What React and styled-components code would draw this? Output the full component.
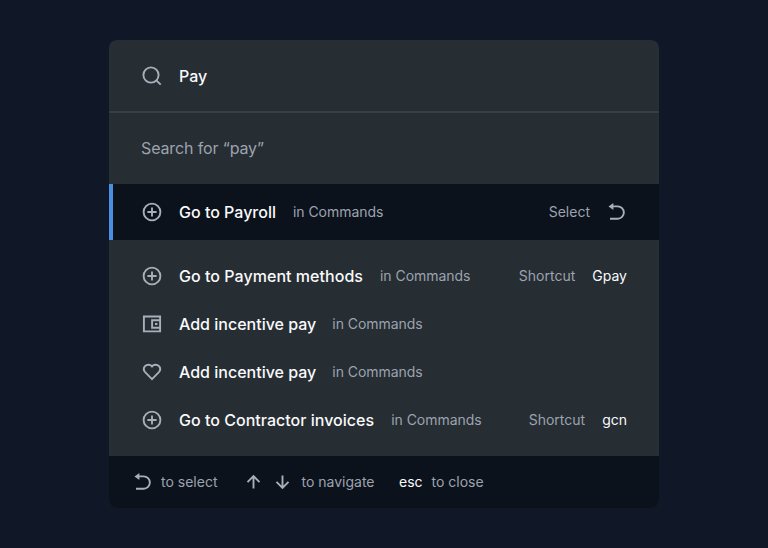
import React from "react";
import styled, { createGlobalStyle } from "styled-components";

const GlobalStyle = createGlobalStyle`
  *, *::before, *::after { box-sizing: border-box; }
  body {
    margin: 0;
    background: #101727;
    font-family: Inter, "Liberation Sans", sans-serif;
  }
`;

const Page = styled.main`
  height: 548px;
  padding: 40px 109px;
  overflow: hidden;
`;

const Palette = styled.section`
  display: flex;
  flex-direction: column;
  width: 550px;
  height: 468px;
  border-radius: 8px;
  overflow: hidden;
  background: #262d33;
`;

const SearchBar = styled.header`
  display: flex;
  align-items: center;
  height: 73px;
  padding: 0 32px;
  border-bottom: 2px solid #373e45;
`;

const Query = styled.span`
  margin-left: 16px;
  font-size: 16px;
  line-height: 24px;
  font-weight: 500;
  color: #f9fafb;
`;

const SearchHint = styled.div`
  height: 71px;
  padding: 23px 32px 0;
  font-size: 16px;
  line-height: 24px;
  letter-spacing: -0.13px;
  color: #9ca3af;
`;

const Results = styled.ul`
  list-style: none;
  margin: 0;
  padding: 0;
  height: 272px;
`;

const Row = styled.li`
  display: flex;
  align-items: center;
  height: ${(p) => (p.$active ? "56px" : "48px")};
  margin-bottom: ${(p) => (p.$active ? "12px" : "0")};
  padding: 0 32px 0 ${(p) => (p.$active ? "28px" : "32px")};
  border-left: ${(p) => (p.$active ? "4px solid #4a90e2" : "0")};
  background: ${(p) => (p.$active ? "#0c121b" : "transparent")};
`;

const Title = styled.span`
  margin-left: 16px;
  font-size: 16px;
  line-height: 24px;
  font-weight: 500;
  letter-spacing: ${(p) => p.$spacing || "0"};
  color: #f9fafb;
`;

const Muted = styled.span`
  font-size: 14px;
  line-height: 20px;
  color: #9ca3af;
`;

const Category = styled(Muted)`
  margin-left: ${(p) => p.$gap || "17px"};
  letter-spacing: -0.04px;
`;

const Action = styled.div`
  display: flex;
  align-items: center;
  gap: 17px;
  margin-left: auto;
`;

const Key = styled.kbd`
  font-family: inherit;
  font-size: 14px;
  line-height: 20px;
  color: #f9fafb;
`;

const Footer = styled.footer`
  display: flex;
  align-items: center;
  height: 52px;
  padding-left: 24px;
  background: #0c121b;
`;

const Hint = styled.div`
  display: flex;
  align-items: center;
  gap: ${(p) => p.$gap};
  margin-right: ${(p) => p.$after || "0"};
`;

const Glyph = styled.svg`
  display: block;
  flex: none;
  width: ${(p) => p.$w || 22}px;
  height: 22px;
  fill: none;
  stroke: #a9afb9;
  stroke-width: 1.9;
`;

const SearchIcon = () => (
  <Glyph viewBox="0 0 22 22">
    <circle cx="10" cy="10" r="7.6" />
    <path d="M15.3 15.3 19.7 19.7" />
  </Glyph>
);

const PlusIcon = () => (
  <Glyph viewBox="0 0 22 22">
    <circle cx="11" cy="11" r="8.4" />
    <path d="M11 6.4v9.2M6.4 11h9.2" />
  </Glyph>
);

const WalletIcon = () => (
  <Glyph viewBox="0 0 22 22">
    <path d="M2.9 3.5h16.2v14.9H2.9zM19.1 7.2h-8v7.6h8" />
    <rect x="14" y="10" width="2.4" height="2" fill="#a9afb9" stroke="none" />
  </Glyph>
);

const HeartIcon = () => (
  <Glyph viewBox="0 0 22 22">
    <path d="M11 18.1 4.1 11.1C2.6 9.5 2.5 7 4 5.2C5.8 3.2 9.3 3.2 11 5.4C12.7 3.2 16.2 3.2 18 5.2C19.5 7 19.4 9.5 17.9 11.1Z" />
  </Glyph>
);

const ReturnIcon = () => (
  <Glyph viewBox="0 0 20 22" $w={20}>
    <path d="M5 5.4h5.7a6.15 6.15 0 0 1 0 12.3H3" />
    <path d="M1.5 5.5 6.4 2v7Z" fill="#a9afb9" stroke="none" />
  </Glyph>
);

const UpIcon = () => (
  <Glyph viewBox="0 0 15 22" $w={15}>
    <path d="M7.5 17.5V5.4M1.5 11.1l6-6 6 6" />
  </Glyph>
);

const DownIcon = () => (
  <Glyph viewBox="0 0 15 22" $w={15}>
    <path d="M7.5 4.5v12.1M1.5 10.9l6 6 6-6" />
  </Glyph>
);

const rows = [
  { icon: PlusIcon, title: "Go to Payroll", active: true },
  { icon: PlusIcon, title: "Go to Payment methods", spacing: "0.04px", shortcut: "Gpay" },
  { icon: WalletIcon, title: "Add incentive pay", gap: "16px" },
  { icon: HeartIcon, title: "Add incentive pay", gap: "16px" },
  { icon: PlusIcon, title: "Go to Contractor invoices", spacing: "0.02px", shortcut: "gcn" },
];

export default function App() {
  return (
    <Page>
      <GlobalStyle />
      <Palette>
        <SearchBar>
          <SearchIcon />
          <Query>Pay</Query>
        </SearchBar>
        <SearchHint>Search for “pay”</SearchHint>
        <Results>
          {rows.map(({ icon: Icon, title, active, shortcut, spacing, gap }, i) => (
            <Row key={i} $active={active}>
              <Icon />
              <Title $spacing={spacing}>{title}</Title>
              <Category $gap={gap}>in Commands</Category>
              {active && (
                <Action>
                  <Muted>Select</Muted>
                  <ReturnIcon />
                </Action>
              )}
              {shortcut && (
                <Action>
                  <Muted>Shortcut</Muted>
                  <Key>{shortcut}</Key>
                </Action>
              )}
            </Row>
          ))}
        </Results>
        <Footer>
          <Hint $gap="8px" $after="29px">
            <ReturnIcon />
            <Muted>to select</Muted>
          </Hint>
          <Hint $gap="11px" $after="24.5px">
            <Hint $gap="14px">
              <UpIcon />
              <DownIcon />
            </Hint>
            <Muted>to navigate</Muted>
          </Hint>
          <Hint $gap="9px">
            <Key>esc</Key>
            <Muted>to close</Muted>
          </Hint>
        </Footer>
      </Palette>
    </Page>
  );
}
